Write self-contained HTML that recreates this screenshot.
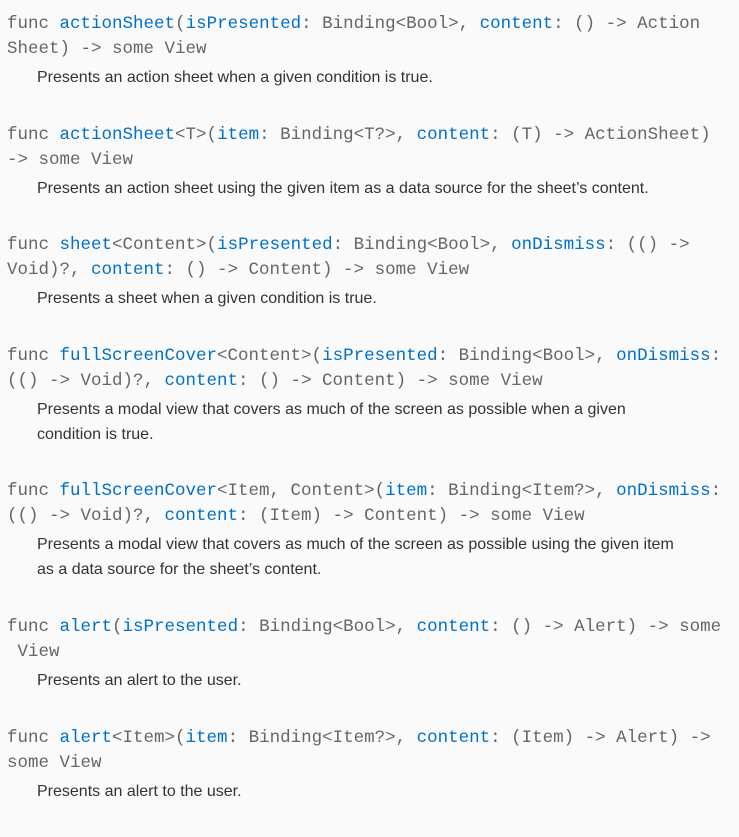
<!DOCTYPE html>
<html><head><style>
body{margin:0;background:#fafafa;width:739px;height:837px;overflow:hidden}
.w{padding-top:12px}
.c{font-family:"Liberation Mono",monospace;font-size:17.5px;line-height:25px;color:#666;margin-left:7px;white-space:pre}
.c b{font-weight:normal;color:#0070c9}
.d{font-family:"Liberation Sans",sans-serif;font-size:16px;line-height:25px;color:#333;margin:3px 0 32.6px 37px;width:686px}
</style></head><body><div class="w">
<div class="c">func <b>actionSheet</b>(<b>isPresented</b>: Binding&lt;Bool&gt;, <b>content</b>: () -&gt; Action
Sheet) -&gt; some View</div>
<div class="d">Presents an action sheet when a given condition is true.</div>
<div class="c">func <b>actionSheet</b>&lt;T&gt;(<b>item</b>: Binding&lt;T?&gt;, <b>content</b>: (T) -&gt; ActionSheet)
-&gt; some View</div>
<div class="d">Presents an action sheet using the given item as a data source for the sheet’s content.</div>
<div class="c">func <b>sheet</b>&lt;Content&gt;(<b>isPresented</b>: Binding&lt;Bool&gt;, <b>onDismiss</b>: (() -&gt;
Void)?, <b>content</b>: () -&gt; Content) -&gt; some View</div>
<div class="d">Presents a sheet when a given condition is true.</div>
<div class="c">func <b>fullScreenCover</b>&lt;Content&gt;(<b>isPresented</b>: Binding&lt;Bool&gt;, <b>onDismiss</b>:
(() -&gt; Void)?, <b>content</b>: () -&gt; Content) -&gt; some View</div>
<div class="d">Presents a modal view that covers as much of the screen as possible when a given<br>condition is true.</div>
<div class="c">func <b>fullScreenCover</b>&lt;Item, Content&gt;(<b>item</b>: Binding&lt;Item?&gt;, <b>onDismiss</b>:
(() -&gt; Void)?, <b>content</b>: (Item) -&gt; Content) -&gt; some View</div>
<div class="d">Presents a modal view that covers as much of the screen as possible using the given item<br>as a data source for the sheet’s content.</div>
<div class="c">func <b>alert</b>(<b>isPresented</b>: Binding&lt;Bool&gt;, <b>content</b>: () -&gt; Alert) -&gt; some
 View</div>
<div class="d">Presents an alert to the user.</div>
<div class="c">func <b>alert</b>&lt;Item&gt;(<b>item</b>: Binding&lt;Item?&gt;, <b>content</b>: (Item) -&gt; Alert) -&gt;
some View</div>
<div class="d">Presents an alert to the user.</div>
</div></body></html>
